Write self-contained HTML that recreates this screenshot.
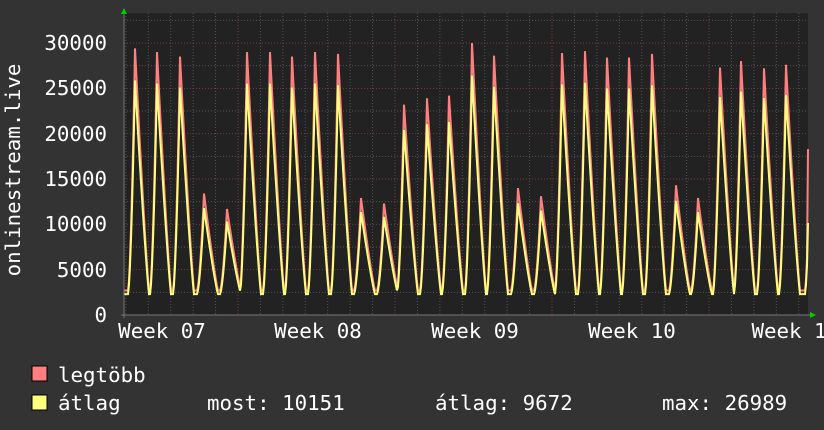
<!DOCTYPE html>
<html><head><meta charset="utf-8"><style>
html,body{margin:0;padding:0;background:#333;}
svg{display:block}
text{font-family:"DejaVu Sans Mono","Liberation Mono",monospace;fill:#fff;font-size:20.8px}
</style></head><body>
<svg id="s" width="824" height="430" xmlns="http://www.w3.org/2000/svg">
<rect width="824" height="430" fill="#333"/>
<rect x="124" y="13" width="684" height="302" fill="#222"/>
<g id="grid"></g>
<g id="data"></g>
<line x1="124" y1="10" x2="124" y2="318" stroke="#777" stroke-width="1"/>
<line x1="121" y1="315" x2="812" y2="315" stroke="#777" stroke-width="1"/>
<polygon points="121,14 127,14 124,8" fill="#0c0"/>
<polygon points="810,312 810,318 816,315" fill="#0c0"/>
<g text-anchor="end">
<text x="107" y="50">30000</text>
<text x="107" y="95">25000</text>
<text x="107" y="141">20000</text>
<text x="107" y="186">15000</text>
<text x="107" y="231">10000</text>
<text x="107" y="277">5000</text>
<text x="107" y="322">0</text>
</g>
<g text-anchor="middle">
<text x="162" y="338">Week 07</text>
<text x="318" y="338">Week 08</text>
<text x="475" y="338">Week 09</text>
<text x="632" y="338">Week 10</text>
<text x="789" y="338">Week 1</text>
</g>
<text transform="translate(20,170) rotate(-90)" text-anchor="middle">onlinestream.live</text>
<rect x="32" y="366" width="15" height="15" fill="#ff7f7f" stroke="#000"/>
<rect x="32" y="395" width="15" height="15" fill="#ffff7f" stroke="#000"/>
<text x="58" y="382">legtöbb</text>
<text x="58" y="410">átlag</text>
<text x="207" y="410">most: 10151</text>
<text x="435" y="410">átlag: 9672</text>
<text x="662" y="410">max: 26989</text>
</svg>
<script>
var NS="http://www.w3.org/2000/svg";
var g=document.getElementById('grid'),d=document.getElementById('data');
function ln(p,x1,y1,x2,y2,c){var l=document.createElementNS(NS,'line');l.setAttribute('x1',x1);l.setAttribute('y1',y1);l.setAttribute('x2',x2);l.setAttribute('y2',y2);l.setAttribute('stroke',c);l.setAttribute('stroke-dasharray','1,2');p.appendChild(l);}
function Y(v){return 315-v*272/30000;}
for(var i=1;i<=13;i++){var y=Y(i*2500);ln(g,124,y,808,y,i%2==0?'#7a3b3b':'#555');}
for(var x=238-22.43*5;x<808;x+=22.43){var wk=Math.abs(((x-238)/156.9)-Math.round((x-238)/156.9))<0.02;ln(g,x,13,x,315,wk?'#7a3b3b':'#555');}
var pk=[[135,29400],[157,29000],[180,28500],[204,13400],[227,11700],[247,29000],[270,29000],[292,28500],[315,29000],[338,28800],[361,12900],[384,12300],[404,23200],[427,23900],[449,24200],[472,30000],[494,28600],[518,14000],[541,13100],[562,28900],[585,29100],[607,28400],[629,28400],[652,28800],[676,14300],[698,12900],[720,27300],[741,28000],[764,27200],[786,27600],[812,29000]];
function val(x,avg){var best=0;for(var i=0;i<pk.length;i++){var t=x-pk[i][0],p=pk[i][1]*(avg?0.88:1),b=avg?2300:2700,f=0;
if(t<=0&&t>-7){f=Math.pow((t+7)/7,1.6);}else if(t>0&&t<14){f=Math.pow(1-t/14,1.15);}
var v=b+(p-b)*f;if(v>best)best=v;}return best;}
function path(avg,c){var s='';for(var x=124;x<=808;x++){var v=val(x,avg);if(x==808&&!avg)v=18300;if(x==808&&avg)v=10151;s+=(x==124?'M':'L')+x+','+Y(v).toFixed(1);}
var p=document.createElementNS(NS,'path');p.setAttribute('d',s);p.setAttribute('fill','none');p.setAttribute('stroke',c);p.setAttribute('stroke-width','2');d.appendChild(p);}
path(false,'#ff7f7f');path(true,'#ffff7f');
</script>
</body></html>
